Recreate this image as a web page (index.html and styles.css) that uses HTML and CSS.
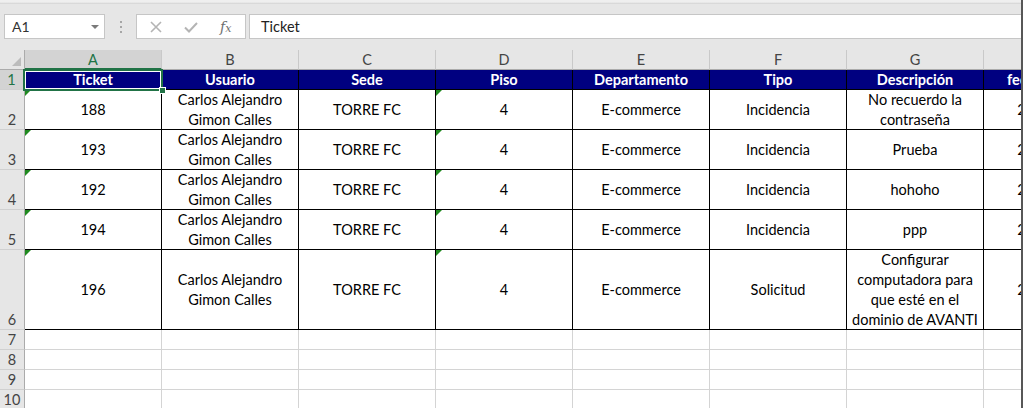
FILE: index.html
```html
<!DOCTYPE html>
<html lang="es">
<head>
<meta charset="utf-8">
<title>Hoja</title>
<link rel="stylesheet" href="styles.css">
</head>
<body>
<div class="app">
  <div class="main">
    <div class="topstrip"></div>
    <div class="fbar">
      <div class="namebox"><span class="nb-text">A1</span><span class="nb-arrow"></span></div>
      <div class="dots"><i></i><i></i><i></i></div>
      <div class="fxbox">
        <svg class="ic" width="14" height="14" viewBox="0 0 14 14"><path d="M2 2L12 12M12 2L2 12" stroke="#b4b4b4" stroke-width="1.6" fill="none"/></svg>
        <svg class="ic" width="16" height="14" viewBox="0 0 16 14"><path d="M2 7.5L6 11.5L14 3" stroke="#b4b4b4" stroke-width="2" fill="none"/></svg>
        <span class="fx"><span class="fx-f">f</span><span class="fx-x">x</span></span>
      </div>
      <div class="finput">Ticket</div>
    </div>
    <div class="sheet">
      <div class="grid">
        <div class="corner"><span class="corner-tri"></span></div>
        <div class="ch sel">A</div><div class="ch">B</div><div class="ch">C</div><div class="ch">D</div><div class="ch">E</div><div class="ch">F</div><div class="ch">G</div><div class="ch">H</div>

        <div class="rh sel">1</div>
        <div class="c hd">Ticket</div><div class="c hd">Usuario</div><div class="c hd">Sede</div><div class="c hd">Piso</div><div class="c hd">Departamento</div><div class="c hd">Tipo</div><div class="c hd">Descripción</div><div class="c hd">fecha_reporte</div>

        <div class="rh">2</div>
        <div class="c d err">188</div><div class="c d">Carlos Alejandro Gimon Calles</div><div class="c d">TORRE FC</div><div class="c d err">4</div><div class="c d">E-commerce</div><div class="c d">Incidencia</div><div class="c d">No recuerdo la contraseña</div><div class="c d">2021-5-04</div>

        <div class="rh">3</div>
        <div class="c d err">193</div><div class="c d">Carlos Alejandro Gimon Calles</div><div class="c d">TORRE FC</div><div class="c d err">4</div><div class="c d">E-commerce</div><div class="c d">Incidencia</div><div class="c d">Prueba</div><div class="c d">2021-5-04</div>

        <div class="rh">4</div>
        <div class="c d err">192</div><div class="c d">Carlos Alejandro Gimon Calles</div><div class="c d">TORRE FC</div><div class="c d err">4</div><div class="c d">E-commerce</div><div class="c d">Incidencia</div><div class="c d">hohoho</div><div class="c d">2021-5-04</div>

        <div class="rh">5</div>
        <div class="c d err">194</div><div class="c d">Carlos Alejandro Gimon Calles</div><div class="c d">TORRE FC</div><div class="c d err">4</div><div class="c d">E-commerce</div><div class="c d">Incidencia</div><div class="c d">ppp</div><div class="c d">2021-5-04</div>

        <div class="rh">6</div>
        <div class="c d err">196</div><div class="c d">Carlos Alejandro Gimon Calles</div><div class="c d">TORRE FC</div><div class="c d err">4</div><div class="c d">E-commerce</div><div class="c d">Solicitud</div><div class="c d">Configurar computadora para que esté en el dominio de AVANTI</div><div class="c d">2021-5-04</div>

        <div class="rh">7</div>
        <div class="c"></div><div class="c"></div><div class="c"></div><div class="c"></div><div class="c"></div><div class="c"></div><div class="c"></div><div class="c"></div>
        <div class="rh">8</div>
        <div class="c"></div><div class="c"></div><div class="c"></div><div class="c"></div><div class="c"></div><div class="c"></div><div class="c"></div><div class="c"></div>
        <div class="rh">9</div>
        <div class="c"></div><div class="c"></div><div class="c"></div><div class="c"></div><div class="c"></div><div class="c"></div><div class="c"></div><div class="c"></div>
        <div class="rh">10</div>
        <div class="c"></div><div class="c"></div><div class="c"></div><div class="c"></div><div class="c"></div><div class="c"></div><div class="c"></div><div class="c"></div>
      </div>
      <div class="selection"><span class="handle"></span></div>
    </div>
  </div>
  <div class="edge"></div>
</div>
</body>
</html>
```

FILE: styles.css
```css
* { box-sizing: border-box; }
html, body { margin: 0; padding: 0; }
body {
  width: 1023px;
  height: 408px;
  overflow: hidden;
  background: #e6e6e6;
  font-family: Lato, "Noto Sans", sans-serif;
  font-size: 14.5px;
  color: #000;
}
.app { display: flex; height: 408px; }
.main { flex: 1; min-width: 0; overflow: hidden; display: flex; flex-direction: column; }
.edge { width: 2px; flex-shrink: 0; background: #575757; }

.topstrip {
  flex-shrink: 0;
  height: 4px;
  background: linear-gradient(#efefef 0, #efefef 2px, #d2d2d2 4px);
}
.fbar {
  flex-shrink: 0;
  height: 46px;
  padding-top: 10px;
  display: flex;
  align-items: flex-start;
  background: #e6e6e6;
}
.namebox {
  margin-left: 4px;
  width: 101px;
  height: 25px;
  background: #fff;
  border: 1px solid #c6c6c6;
  display: flex;
  align-items: center;
  justify-content: space-between;
  padding: 0 5px 0 7px;
  font-size: 14px;
  color: #333;
}
.nb-arrow {
  width: 0; height: 0;
  border-left: 4px solid transparent;
  border-right: 4px solid transparent;
  border-top: 4px solid #7a7a7a;
}
.dots {
  width: 31px;
  height: 25px;
  display: flex;
  flex-direction: column;
  align-items: center;
  justify-content: center;
  gap: 3px;
}
.dots i { display: block; width: 2px; height: 2px; background: #a6a6a6; }
.fxbox {
  width: 110px;
  height: 25px;
  background: #fff;
  border: 1px solid #c6c6c6;
  display: flex;
  align-items: center;
  padding-left: 12px;
  gap: 20px;
}
.ic { display: block; }
.fx { font-family: "DejaVu Serif", "Liberation Serif", serif; font-style: italic; color: #6e6e6e; font-size: 14px; margin-left: 1px; }
.fx-x { font-size: 11px; }
.finput {
  flex: 1;
  margin-left: 3px;
  height: 25px;
  background: #fff;
  border: 1px solid #c6c6c6;
  border-right: none;
  padding-left: 11px;
  display: flex;
  align-items: center;
  color: #222;
}

.sheet { position: relative; flex: 1; min-height: 0; background: #fff; }
.grid {
  display: grid;
  grid-template-columns: 25px repeat(8, 137px);
  grid-template-rows: 20px 20px 40px 40px 40px 40px 80px 20px 20px 20px 20px;
  width: 1121px;
}
.corner {
  background: #e6e6e6;
  border-right: 1px solid #ababab;
  border-bottom: 1px solid #ababab;
  position: relative;
}
.corner-tri {
  position: absolute;
  right: 3px;
  bottom: 3px;
  width: 0; height: 0;
  border-left: 9px solid transparent;
  border-bottom: 9px solid #bcbcbc;
}
.ch {
  background: #e6e6e6;
  border-right: 1px solid #c9c9c9;
  border-bottom: 1px solid #ababab;
  display: flex;
  align-items: center;
  justify-content: center;
  color: #444;
}
.ch.sel { background: #d3d3d3; color: #217346; border-bottom: 2px solid #217346; }
.rh {
  background: #e6e6e6;
  border-right: 1px solid #ababab;
  border-bottom: 1px solid #d0d0d0;
  display: flex;
  align-items: flex-end;
  justify-content: center;
  line-height: 19px;
  color: #444;
}
.rh.sel { background: #d3d3d3; color: #217346; border-right: 2px solid #217346; }
.c {
  border-right: 1px solid #d4d4d4;
  border-bottom: 1px solid #d4d4d4;
  display: flex;
  align-items: center;
  justify-content: center;
  text-align: center;
  line-height: 20px;
  padding: 0 4px;
  position: relative;
  white-space: normal;
}
.c.hd {
  background: #000080;
  color: #fff;
  font-weight: 700;
  border-right: 1px solid #000;
  border-bottom: 1px solid #000;
  white-space: nowrap;
}
.c.d {
  border-right: 1px solid #000;
  border-bottom: 1px solid #000;
  white-space: normal;
}
.c.err::before {
  content: "";
  position: absolute;
  left: 0; top: 0;
  width: 0; height: 0;
  border-top: 6px solid #1f8a1f;
  border-right: 6px solid transparent;
}
.selection {
  position: absolute;
  left: 23px;
  top: 19px;
  width: 140px;
  height: 22px;
  border: 2px solid #217346;
  box-shadow: inset 0 0 0 1px #fff;
}
.handle {
  position: absolute;
  right: -5px;
  bottom: -5px;
  width: 7px;
  height: 7px;
  background: #217346;
  border: 1px solid #fff;
}
```
